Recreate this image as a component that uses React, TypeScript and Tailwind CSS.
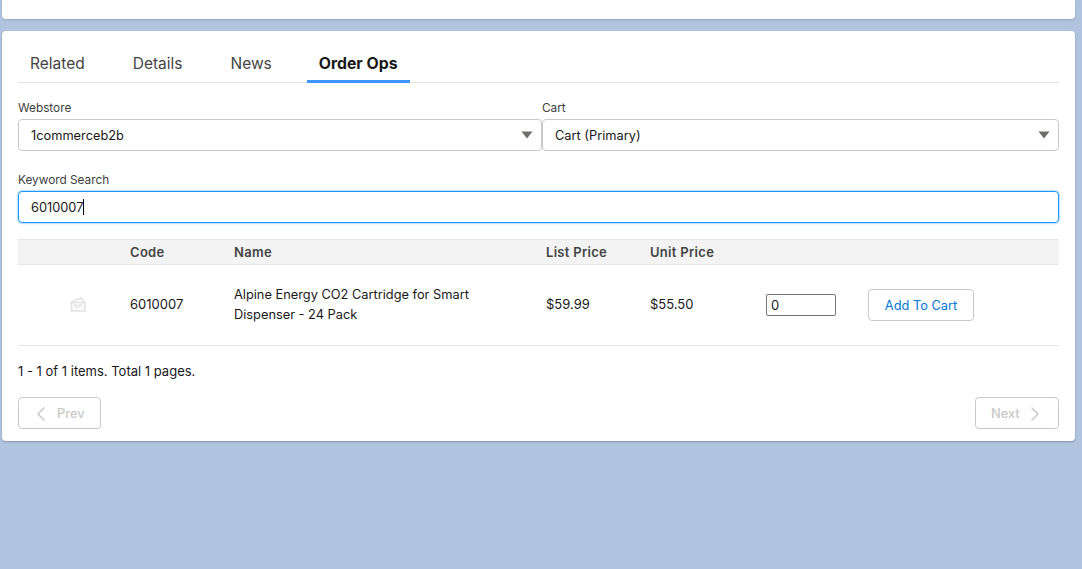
import { ChevronLeft, ChevronRight } from "lucide-react";

const TABS = [
  { label: "Related", active: false },
  { label: "Details", active: false },
  { label: "News", active: false },
  { label: "Order Ops", active: true },
];

const Caret = () => (
  <svg width="12" height="8" viewBox="0 0 12 8" className="absolute right-[8px] top-[11px]">
    <path d="M0.5 0.5h11L6 7.5z" fill="#706e6b" />
  </svg>
);

const SelectBox = ({ label, value }: { label: string; value: string }) => (
  <div>
    <div className="h-[21px] pt-[1px] text-[11.8px] leading-[18px] text-[#3e3e3c]">{label}</div>
    <div className="relative h-[32px] rounded-[4px] border border-[#c9c9c9] bg-white pl-[12px] text-[12.8px] leading-[32px] text-[#181818]">
      {value}
      <Caret />
    </div>
  </div>
);

const ProductIcon = () => (
  <svg width="16" height="15" viewBox="0 0 16 15" fill="none" stroke="#e3e3e3" strokeWidth="1.5">
    <path d="M1 5 L11.5 1 L14 5" />
    <rect x="1.5" y="5.5" width="13.5" height="8.5" fill="#f9f9f9" />
    <path d="M4 8 H12 L8 10.5 Z" strokeWidth="1" />
  </svg>
);

export default function App() {
  return (
    <div className="h-[569px] overflow-hidden bg-[#b0c4df] font-['Inter',sans-serif]">
      <div className="ml-[2px] h-[19px] w-[1073px] rounded-b-[4px] bg-white shadow-[0_1px_2px_rgba(0,0,0,0.15)]" />

      <section className="ml-[2px] mt-[12px] h-[410px] w-[1073px] rounded-[4px] bg-white px-[16px] shadow-[0_1px_2px_rgba(0,0,0,0.25)]">
        <div className="flex h-[52px] gap-6 border-b border-[#e5e5e5] pt-[20px]">
          {TABS.map((tab) => (
            <div
              key={tab.label}
              className={
                tab.active
                  ? "-ml-[1px] h-[32px] border-b-[3px] border-[#3e98fb] px-3 text-[15.8px] font-bold leading-[26px] text-[#181818]"
                  : "h-[32px] px-3 text-[15.5px] leading-[26px] text-[#444444]"
              }
            >
              {tab.label}
            </div>
          ))}
        </div>

        <div className="mt-[15px] grid grid-cols-[524px_517px]">
          <SelectBox label="Webstore" value="1commerceb2b" />
          <SelectBox label="Cart" value="Cart (Primary)" />
        </div>

        <div className="mt-[19px] h-[21px] pt-[1px] text-[11.8px] leading-[18px] text-[#3e3e3c]">Keyword Search</div>
        <div className="h-[32px] rounded-[4px] border border-[#1b96ff] pl-[12px] text-[12.8px] leading-[32px] text-[#181818] shadow-[0_0_2px_#1b96ff]">
          6010007<span className="inline-block h-[16px] w-px translate-y-[3px] bg-black" />
        </div>

        <div className="mt-[16px] grid h-[26px] grid-cols-[112px_104px_312px_104px_1fr] items-center border-y border-[#e5e5e5] bg-[#f3f3f3] pt-[2px] text-[13px] font-semibold tracking-[0.3px] text-[#444444]">
          <span />
          <span>Code</span>
          <span>Name</span>
          <span>List Price</span>
          <span>Unit Price</span>
        </div>

        <div className="grid h-[81px] grid-cols-[112px_104px_312px_104px_116px_102px_1fr] items-center border-b border-[#e5e5e5] text-[13px] text-[#181818]">
          <span className="-mt-[1px] flex justify-center pl-[8px]">
            <ProductIcon />
          </span>
          <span>6010007</span>
          <span className="-mt-[1px] w-[270px] text-[12.8px] leading-[20px]">
            Alpine Energy CO2 Cartridge for Smart Dispenser - 24 Pack
          </span>
          <span>$59.99</span>
          <span>$55.50</span>
          <span className="block h-[22px] w-[70px] rounded-[2px] border border-[#767676] pl-[4px] text-[13px] leading-[20px]">0</span>
          <span className="block h-[32px] w-[106px] rounded-[4px] border border-[#c9c9c9] text-center text-[12.8px] leading-[32px] text-[#0176d3]">
            Add To Cart
          </span>
        </div>

        <div className="mt-[16px] text-[13px] leading-[18px] text-[#181818]">1 - 1 of 1 items. Total 1 pages.</div>

        <div className="mt-[17px] flex justify-between">
          <div className="flex h-[32px] w-[83px] items-center gap-[4px] rounded-[4px] border border-[#c9c9c9] pl-[10px] pt-[2px] text-[12.8px] font-medium text-[#c9c9c9]">
            <ChevronLeft size={24} strokeWidth={1.5} />
            Prev
          </div>
          <div className="flex h-[32px] w-[84px] items-center gap-[3px] rounded-[4px] border border-[#c9c9c9] pl-[15px] pt-[2px] text-[12.8px] font-medium text-[#c9c9c9]">
            Next
            <ChevronRight size={24} strokeWidth={1.5} />
          </div>
        </div>
      </section>
    </div>
  );
}
